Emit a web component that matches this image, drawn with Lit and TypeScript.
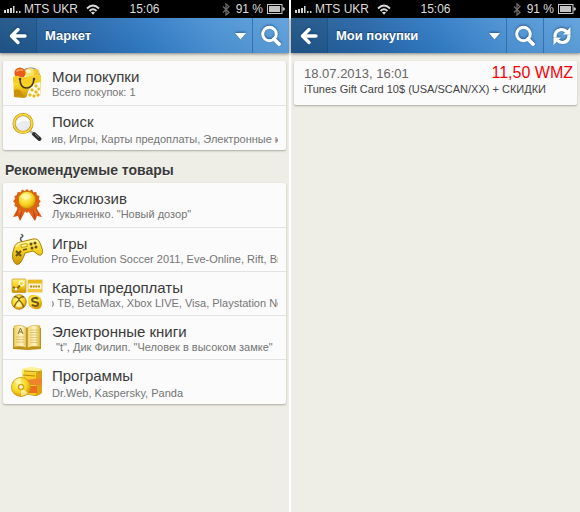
import { LitElement, html, css, svg, nothing } from "lit";
import { customElement, property } from "lit/decorators.js";
import { styleMap } from "lit/directives/style-map.js";

interface Item {
  icon: string;
  title: string;
  note: string;
  /** how far the running line has scrolled, in pixels */
  scroll?: number;
}

const mine: Item[] = [
  { icon: "bag", title: "Мои покупки", note: "Всего покупок: 1" },
  { icon: "glass", title: "Поиск", note: "Эксклюзив, Игры, Карты предоплаты, Электронные книги", scroll: 44 },
];

const featured: Item[] = [
  { icon: "medal", title: "Эксклюзив", note: "Лукьяненко. \"Новый дозор\"" },
  { icon: "pad", title: "Игры", note: "Pro Evolution Soccer 2011, Eve-Online, Rift, Brink", scroll: 1 },
  { icon: "cards", title: "Карты предоплаты", note: "о ТВ, BetaMax, Xbox LIVE, Visa, Playstation Network", scroll: 4 },
  { icon: "book", title: "Электронные книги", note: "\"t\", Дик Филип. \"Человек в высоком замке\"", scroll: -4 },
  { icon: "soft", title: "Программы", note: "Dr.Web, Kaspersky, Panda" },
];

const gold = svg`<defs>
  <linearGradient id="g" x1="0" y1="0" x2="0" y2="1">
    <stop offset="0" stop-color="#fff27a"/><stop offset=".5" stop-color="#f6cf1d"/><stop offset="1" stop-color="#c88f06"/>
  </linearGradient>
  <linearGradient id="o" x1="0" y1="0" x2="0" y2="1">
    <stop offset="0" stop-color="#f79a3c"/><stop offset="1" stop-color="#cf3d0c"/>
  </linearGradient>
  <radialGradient id="r" cx=".4" cy=".35" r=".7">
    <stop offset="0" stop-color="#fff98c"/><stop offset=".6" stop-color="#f8d21c"/><stop offset="1" stop-color="#cf8f08"/>
  </radialGradient>
  <linearGradient id="p" x1="0" y1="0" x2="1" y2="0">
    <stop offset="0" stop-color="#f0d267"/><stop offset=".6" stop-color="#fff6c8"/><stop offset="1" stop-color="#dcb43a"/>
  </linearGradient>
</defs>`;

const art: Record<string, unknown> = {
  bag: svg`
    <path d="M12 5Q14 1 20 1Q27 1 28 7L29 14" fill="none" stroke="#7c7c74" stroke-width="1.2"/>
    <circle cx="24" cy="6.500" r="4.500" fill="#f3c62a"/><circle cx="18.500" cy="6" r="4.800" fill="#fbe36a"/>
    <ellipse cx="17.500" cy="4.500" rx="2.500" ry="1.800" fill="#fffbd0"/>
    <circle cx="9" cy="6" r="5.600" fill="#ea5c17"/><path d="M5.500 4.500Q8 1.500 12 3.500" stroke="#ffa35c" stroke-width="1.500" fill="none"/>
    <path d="M2 10Q6 8 9 10Q15 11 20 9L30 8L29 31L3 30Z" fill="url(#g)"/>
    <path d="M2 10Q6 8 9 10Q15 11 20 9L30 8V15Q17 20 2 15Z" fill="#f7cf22"/>
    <path d="M3 23Q9 21 11 26L14 31L3 30Z" fill="#c99208"/>
    <path d="M29 15Q21 17 18 22L15 31L29 31Z" fill="#fffdf0"/>
    <path d="M25 17l2 2-2 2-2-2zM28 20l1 2-1 2-2-2zM21 21l2 2-2 2-2-2zM25 23l2 2-2 2-2-2zM19 26l2 2-2 2-2-2zM23 27l2 2-2 2-2-2zM27 26l2 2-2 2-2-2z" fill="#e9b81d"/>
    <path d="M9 12Q9 21 15.500 21Q22 21 23 12" fill="none" stroke="#49361a" stroke-width="1.700"/>
    <circle cx="9" cy="12" r="1.300" fill="#49361a"/><circle cx="23" cy="12" r="1.300" fill="#49361a"/>`,
  glass: svg`
    <path d="M19 19L24 23" stroke="#b9b9b9" stroke-width="2.600"/>
    <path d="M23 22L28.500 27" stroke="#2d2d2d" stroke-width="4" stroke-linecap="round"/>
    <path d="M24 22L28 25.500" stroke="#888" stroke-width="1"/>
    <circle cx="12" cy="11.500" r="9" fill="#e9ebf1" stroke="#b8890f" stroke-width="3"/>
    <circle cx="12" cy="11.500" r="9" fill="none" stroke="#f8d93a" stroke-width="1.800"/>
    <path d="M6 12Q6 5 13 5Q18 6 18 9Q12 7 6 12Z" fill="#fff"/>`,
  medal: svg`
    <path d="M9 15L2 28L7 27L9 32L16 19Z" fill="url(#o)"/>
    <path d="M23 15L31 28L26 27L24 32L15 19Z" fill="url(#o)"/>
    <path d="M8 19L5 26M25 20L28 26M11 21L9 28M22 21L24 28" stroke="#b3300a" stroke-width=".8"/>
    <path d="M16 0l2.200 2 2.800-1.400 1.400 2.600 3-.2.400 3 2.800 1.200-.8 2.800 2 2.200-2 2.200.8 2.800-2.800 1.200-.6 3-3-.2-1.400 2.500-2.700-1.400L16 24l-2.200-1.800-2.800 1.400-1.400-2.500-3 .2-.6-3-2.700-1.200.8-2.800L2 12.200l2.100-2.200-.8-2.800L6 6l.6-3 3 .2L11 .6 13.800 2z" fill="#df6012"/>
    <circle cx="16" cy="11" r="8.700" fill="url(#r)" stroke="#c77b09"/>
    <ellipse cx="15" cy="7.500" rx="5" ry="3" fill="#fffbb0" opacity=".7"/>`,
  pad: svg`
    <path d="M11 8Q8 4 11 3Q13 2 10 0" fill="none" stroke="#555b66" stroke-width="1.500"/>
    <path d="M3 14Q5 8 10 8L22 5Q27 4 29 9Q33 18 31 20Q29 23 25 19L22 17L14 19Q13 23 10 28Q6 33 3 28Q0 23 3 14Z" fill="url(#g)" stroke="#ad820e" stroke-width="1"/>
    <path d="M5 13Q7 9 12 9L22 7Q26 6 27 9" fill="none" stroke="#fff6a1" stroke-width="1.300"/>
    <path d="M5 17L10 22M10 17L5 22" stroke="#67521b" stroke-width="2.200"/>
    <rect x="10" y="10" width="6" height="3" fill="#fff08a" stroke="#b98b0d" stroke-width=".7" transform="rotate(-12 13 11)"/>
    <path d="M12 16L16 15" stroke="#67521b" stroke-width="1.500"/>
    <g fill="#67521b"><circle cx="20" cy="10" r="1.500"/><circle cx="24" cy="9" r="1.500"/><circle cx="21" cy="14" r="1.500"/><circle cx="25" cy="13" r="1.500"/></g>`,
  cards: svg`
    <rect x="1" y="1" width="14" height="13.500" rx="1" fill="url(#g)" stroke="#c29512" stroke-width=".7"/>
    <circle cx="10.500" cy="5.500" r="2.400" fill="none" stroke="#fffbe0" stroke-width="1.300"/>
    <path d="M2 9L5.500 11L9 7.500" fill="none" stroke="#8a6508" stroke-width="2"/><circle cx="5" cy="11" r="1.500" fill="#fffbe0"/>
    <rect x="17" y="2" width="14" height="12" fill="#fff5cf" stroke="#dfb232" stroke-width=".7"/>
    <path d="M17 2H31V5.500H17z" fill="#eab91b"/><path d="M17 11H31V14H17z" fill="#f2c73c"/>
    <path d="M19 8.500H29" stroke="#b98713" stroke-width="1.800" stroke-dasharray="2 .7"/>
    <circle cx="8" cy="24" r="7.300" fill="url(#r)" stroke="#a87c0d" stroke-width=".8"/>
    <path d="M3 19Q6 18 8 21Q10 18 13 19M3 29Q5 24 8 22Q11 24 13 29" fill="none" stroke="#826111" stroke-width="1.400"/>
    <path d="M5 28Q6 25 8 24Q10 25 11 28Q8 30 5 28Z" fill="#fff4aa"/>
    <circle cx="22" cy="21.500" r="4.800" fill="#f6ce20"/><circle cx="26" cy="26.500" r="4.800" fill="#dfa80d"/>
    <circle cx="24" cy="24" r="6.800" fill="url(#r)"/>
    <path d="M27 21Q25.500 19.500 23.500 20Q21 20.500 21 22Q21 23.500 24 24Q27.400 24.500 27.200 26Q27 28 24.300 28Q22 28 21 26.500" fill="none" stroke="#745914" stroke-width="2"/>`,
  book: svg`
    <path d="M2 6L15 7L30 6V27L17 28L2 27Z" fill="#bb8f16"/>
    <path d="M3 4Q11 2 16 6V26Q10 23 3 25Z" fill="url(#p)" stroke="#d0a62c" stroke-width=".6"/>
    <path d="M29 4Q21 2 16 6V26Q22 23 29 25Z" fill="url(#p)" stroke="#d0a62c" stroke-width=".6"/>
    <path d="M16 6V26" stroke="#a57a12" stroke-width="1"/>
    <path d="M7 12L9.500 6L12 12M8 10H11" fill="none" stroke="#87722e" stroke-width="1"/>
    <path d="M5 15H13M5 17.500H13M5 20H13M19 8H27M19 10.500H27M19 13H27M19 15.500H27M19 18H27M19 20.500H27" stroke="#cda94d" stroke-width=".6"/>`,
  soft: svg`
    <path d="M11 3L20 1L31 3L30 28L25 30L12 28Z" fill="url(#g)"/>
    <path d="M11 3L20 1L31 3L26 5Z" fill="#fff09a"/>
    <path d="M13 6L25 7L25 29L13 28Z" fill="#f8ce27"/><path d="M31 4L25 7V30L31 27Z" fill="#dda213"/>
    <path d="M13 5L29 6M12 9L24 10" stroke="#b98a12" stroke-width="1"/>
    <path d="M14 14L31 12V19L15 19Z" fill="#f0842d"/><path d="M16 20H26V27H16z" fill="#f06d1e"/>
    <circle cx="10" cy="21" r="10" fill="#c9971a"/>
    <circle cx="10" cy="21" r="9.300" fill="url(#r)"/>
    <path d="M10 21L3 15A9 9 0 0 1 10 12ZM10 21L17 27A9 9 0 0 1 10 30Z" fill="#fffbc0" opacity=".7"/>
    <circle cx="10" cy="21" r="3.300" fill="#d8a71d"/><circle cx="10" cy="21" r="1.800" fill="#fffbe8"/>`,
};

@customElement("status-bar")
class StatusBar extends LitElement {
  static styles = css`
    :host {
      display: grid;
      grid-template-columns: 1fr auto 1fr;
      align-items: center;
      height: 18px;
      padding: 0 4px;
      background: #000;
      color: #dcdcdc;
      font-size: 12px;
      line-height: 18px;
      white-space: nowrap;
    }
    .side { display: flex; align-items: center; }
    .carrier { margin: 0 8px 0 3px; }
    .end { justify-content: flex-end; }
    .charge { margin: 0 4px 0 6px; }
    svg { display: block; }
  `;
  render() {
    return html`
      <div class="side">
        <svg width="17" height="10" viewBox="0 0 17 10" fill="#d6d6d6" aria-hidden="true">
          <path d="M0 6h2v3H0zM3 5h2v4H3zM6 4h2v5H6zM9 2h1.500v7H9zM12 7h1.500v2H12zM15 7h1.500v2H15z" />
        </svg>
        <span class="carrier">MTS UKR</span>
        <svg width="14" height="11" viewBox="0 0 14 11" fill="none" stroke="#dcdcdc" stroke-width="1.800" aria-hidden="true">
          <path d="M1 4.500Q7-1.500 13 4.500M3.500 7Q7 3.500 10.500 7" /><path d="M5 8.500Q7 6.800 9 8.500L7 10.800Z" fill="#dcdcdc" stroke="none" />
        </svg>
      </div>
      <span>15:06</span>
      <div class="side end">
        <svg width="8" height="13" viewBox="0 0 8 13" fill="none" stroke="#6b6b6b" stroke-width="1.300" aria-hidden="true">
          <path d="M1 3.500L7 9.500L4 12V1L7 3.500L1 9.500" />
        </svg>
        <span class="charge">91 %</span>
        <svg width="18" height="10" viewBox="0 0 18 10" aria-hidden="true">
          <rect x=".5" y=".5" width="14.500" height="9" fill="none" stroke="#c9c9c9" />
          <rect x="2" y="2" width="11" height="6" fill="#c2c2c2" />
          <path d="M15.500 3Q18 3.500 18 5Q18 6.500 15.500 7" fill="#c9c9c9" />
        </svg>
      </div>
    `;
  }
}

@customElement("title-bar")
class TitleBar extends LitElement {
  @property() heading = "";
  @property({ type: Boolean }) refresh = false;

  static styles = css`
    :host {
      display: flex;
      height: 35px;
      background:
        linear-gradient(rgba(255, 255, 255, 0.06), rgba(0, 0, 0, 0.03)),
        linear-gradient(90deg, #225a90 0%, #2664a6 25%, #2f7ac4 50%, #4b92d4 75%, #5c9fdb 100%);
      box-shadow: 0 1px 3px rgba(60, 60, 60, 0.6);
    }
    button {
      display: flex;
      align-items: center;
      justify-content: center;
      width: 37px;
      padding: 0;
      border: 0;
      background: none;
      color: #fff;
      font: bold 13px/16px "Liberation Sans", Arial, sans-serif;
    }
    .back { border-right: 1px solid rgba(10, 40, 80, 0.2); background: rgba(10, 35, 60, 0.1); }
    .menu {
      flex: 1;
      justify-content: space-between;
      padding: 0 6px 0 8px;
      text-shadow: 0 -1px 1px rgba(10, 40, 80, 0.7);
    }
    .tool { border-left: 1px solid rgba(25, 75, 130, 0.5); }
    svg { display: block; filter: drop-shadow(0 -1px 1px rgba(15, 50, 95, 0.6)); }
  `;
  render() {
    return html`
      <button class="back" aria-label="Назад">
        <svg width="18" height="18" viewBox="0 0 18 18" fill="none" stroke="#fff" stroke-width="3.400" stroke-linecap="round" stroke-linejoin="round">
          <path d="M9 2.500L2.500 9L9 15.500M3.500 9H16" />
        </svg>
      </button>
      <button class="menu">
        <span>${this.heading}</span>
        <svg width="11" height="8" viewBox="0 0 11 8"><path d="M0 1H11L5.500 7.500Z" fill="#fff" /></svg>
      </button>
      <button class="tool" aria-label="Поиск">
        <svg width="22" height="22" viewBox="0 0 22 22" fill="none" stroke="#fff">
          <circle cx="9.500" cy="9" r="6.800" stroke-width="3" /><path d="M14 14L19 19" stroke-width="3.800" stroke-linecap="round" />
        </svg>
      </button>
      ${this.refresh
        ? html`<button class="tool" aria-label="Обновить">
            <svg width="20" height="20" viewBox="0 0 20 20" fill="none" stroke="#fff" stroke-width="3.200">
              <path d="M3 11.500Q2.500 4.500 9 3.500Q12 3.300 14.500 5.500M17 8.500Q17.500 15.500 11 16.500Q8 16.700 5.500 14.500" />
              <path d="M18.500 1V8.500H11ZM1.500 19V11.500H9Z" fill="#fff" stroke="none" />
            </svg>
          </button>`
        : nothing}
    `;
  }
}

@customElement("item-list")
class ItemList extends LitElement {
  @property({ attribute: false }) items: Item[] = [];

  static styles = css`
    :host { display: block; }
    ul {
      margin: 0;
      padding: 0;
      list-style: none;
      border-radius: 2px;
      background: #fbfbfb;
      box-shadow: 0 1px 2px rgba(90, 90, 75, 0.45);
    }
    .row {
      display: flex;
      gap: 9px;
      box-sizing: border-box;
      height: 44px;
      padding: 6px 8px 0;
      color: inherit;
      text-decoration: none;
    }
    li + li .row { border-top: 1px solid #e2e2e2; }
    li:last-child .row { height: 45px; }
    .icon { flex: none; }
    .text { flex: 1; min-width: 0; padding-top: 2px; }
    .title { font-size: 15px; line-height: 16px; color: #3a3a3a; }
    .note {
      overflow: hidden;
      font-size: 11px;
      line-height: 14px;
      color: #757575;
      white-space: nowrap;
    }
    li:last-child .note { margin-top: 2px; }
  `;
  render() {
    return html`<ul>
      ${this.items.map(
        (it) => html`<li>
          <a class="row" href="#">
            <svg class="icon" width="32" height="32" viewBox="0 0 32 32" aria-hidden="true">${gold}${art[it.icon]}</svg>
            <div class="text">
              <div class="title">${it.title}</div>
              <div class="note" style=${styleMap({ textIndent: `${-(it.scroll ?? 0)}px` })}>${it.note}</div>
            </div>
          </a>
        </li>`
      )}
    </ul>`;
  }
}

@customElement("app-root")
class AppRoot extends LitElement {
  static styles = css`
    :host {
      display: grid;
      grid-template-columns: 1fr 1fr;
      gap: 2px;
      min-height: 100vh;
      background: #fff;
      font-family: "Liberation Sans", Arial, sans-serif;
    }
    .screen { min-width: 0; background: #eeeee6; }
    .body { padding: 8px 3px; }
    h2 {
      margin: 0;
      padding: 11px 2px 4px;
      font-size: 14px;
      line-height: 18px;
      color: #3a3a3a;
      text-shadow: 0 1px 0 #fff;
    }
    .order {
      display: grid;
      grid-template-columns: 1fr auto;
      padding: 4px 4px 10px 10px;
      border-radius: 2px;
      background: #fbfbfb;
      box-shadow: 0 1px 2px rgba(90, 90, 75, 0.45);
    }
    .date { font-size: 13px; line-height: 18px; color: #666; }
    .price { font-size: 16px; line-height: 16px; color: #f80008; }
    .name { grid-column: 1 / -1; font-size: 11px; line-height: 12px; color: #444; }
  `;
  render() {
    return html`
      <section class="screen">
        <status-bar></status-bar>
        <title-bar heading="Маркет"></title-bar>
        <div class="body">
          <item-list .items=${mine}></item-list>
          <h2>Рекомендуемые товары</h2>
          <item-list .items=${featured}></item-list>
        </div>
      </section>
      <section class="screen">
        <status-bar></status-bar>
        <title-bar heading="Мои покупки" refresh></title-bar>
        <div class="body">
          <article class="order">
            <span class="date">18.07.2013, 16:01</span>
            <span class="price">11,50 WMZ</span>
            <span class="name">iTunes Gift Card 10$ (USA/SCAN/XX) + СКИДКИ</span>
          </article>
        </div>
      </section>
    `;
  }
}
